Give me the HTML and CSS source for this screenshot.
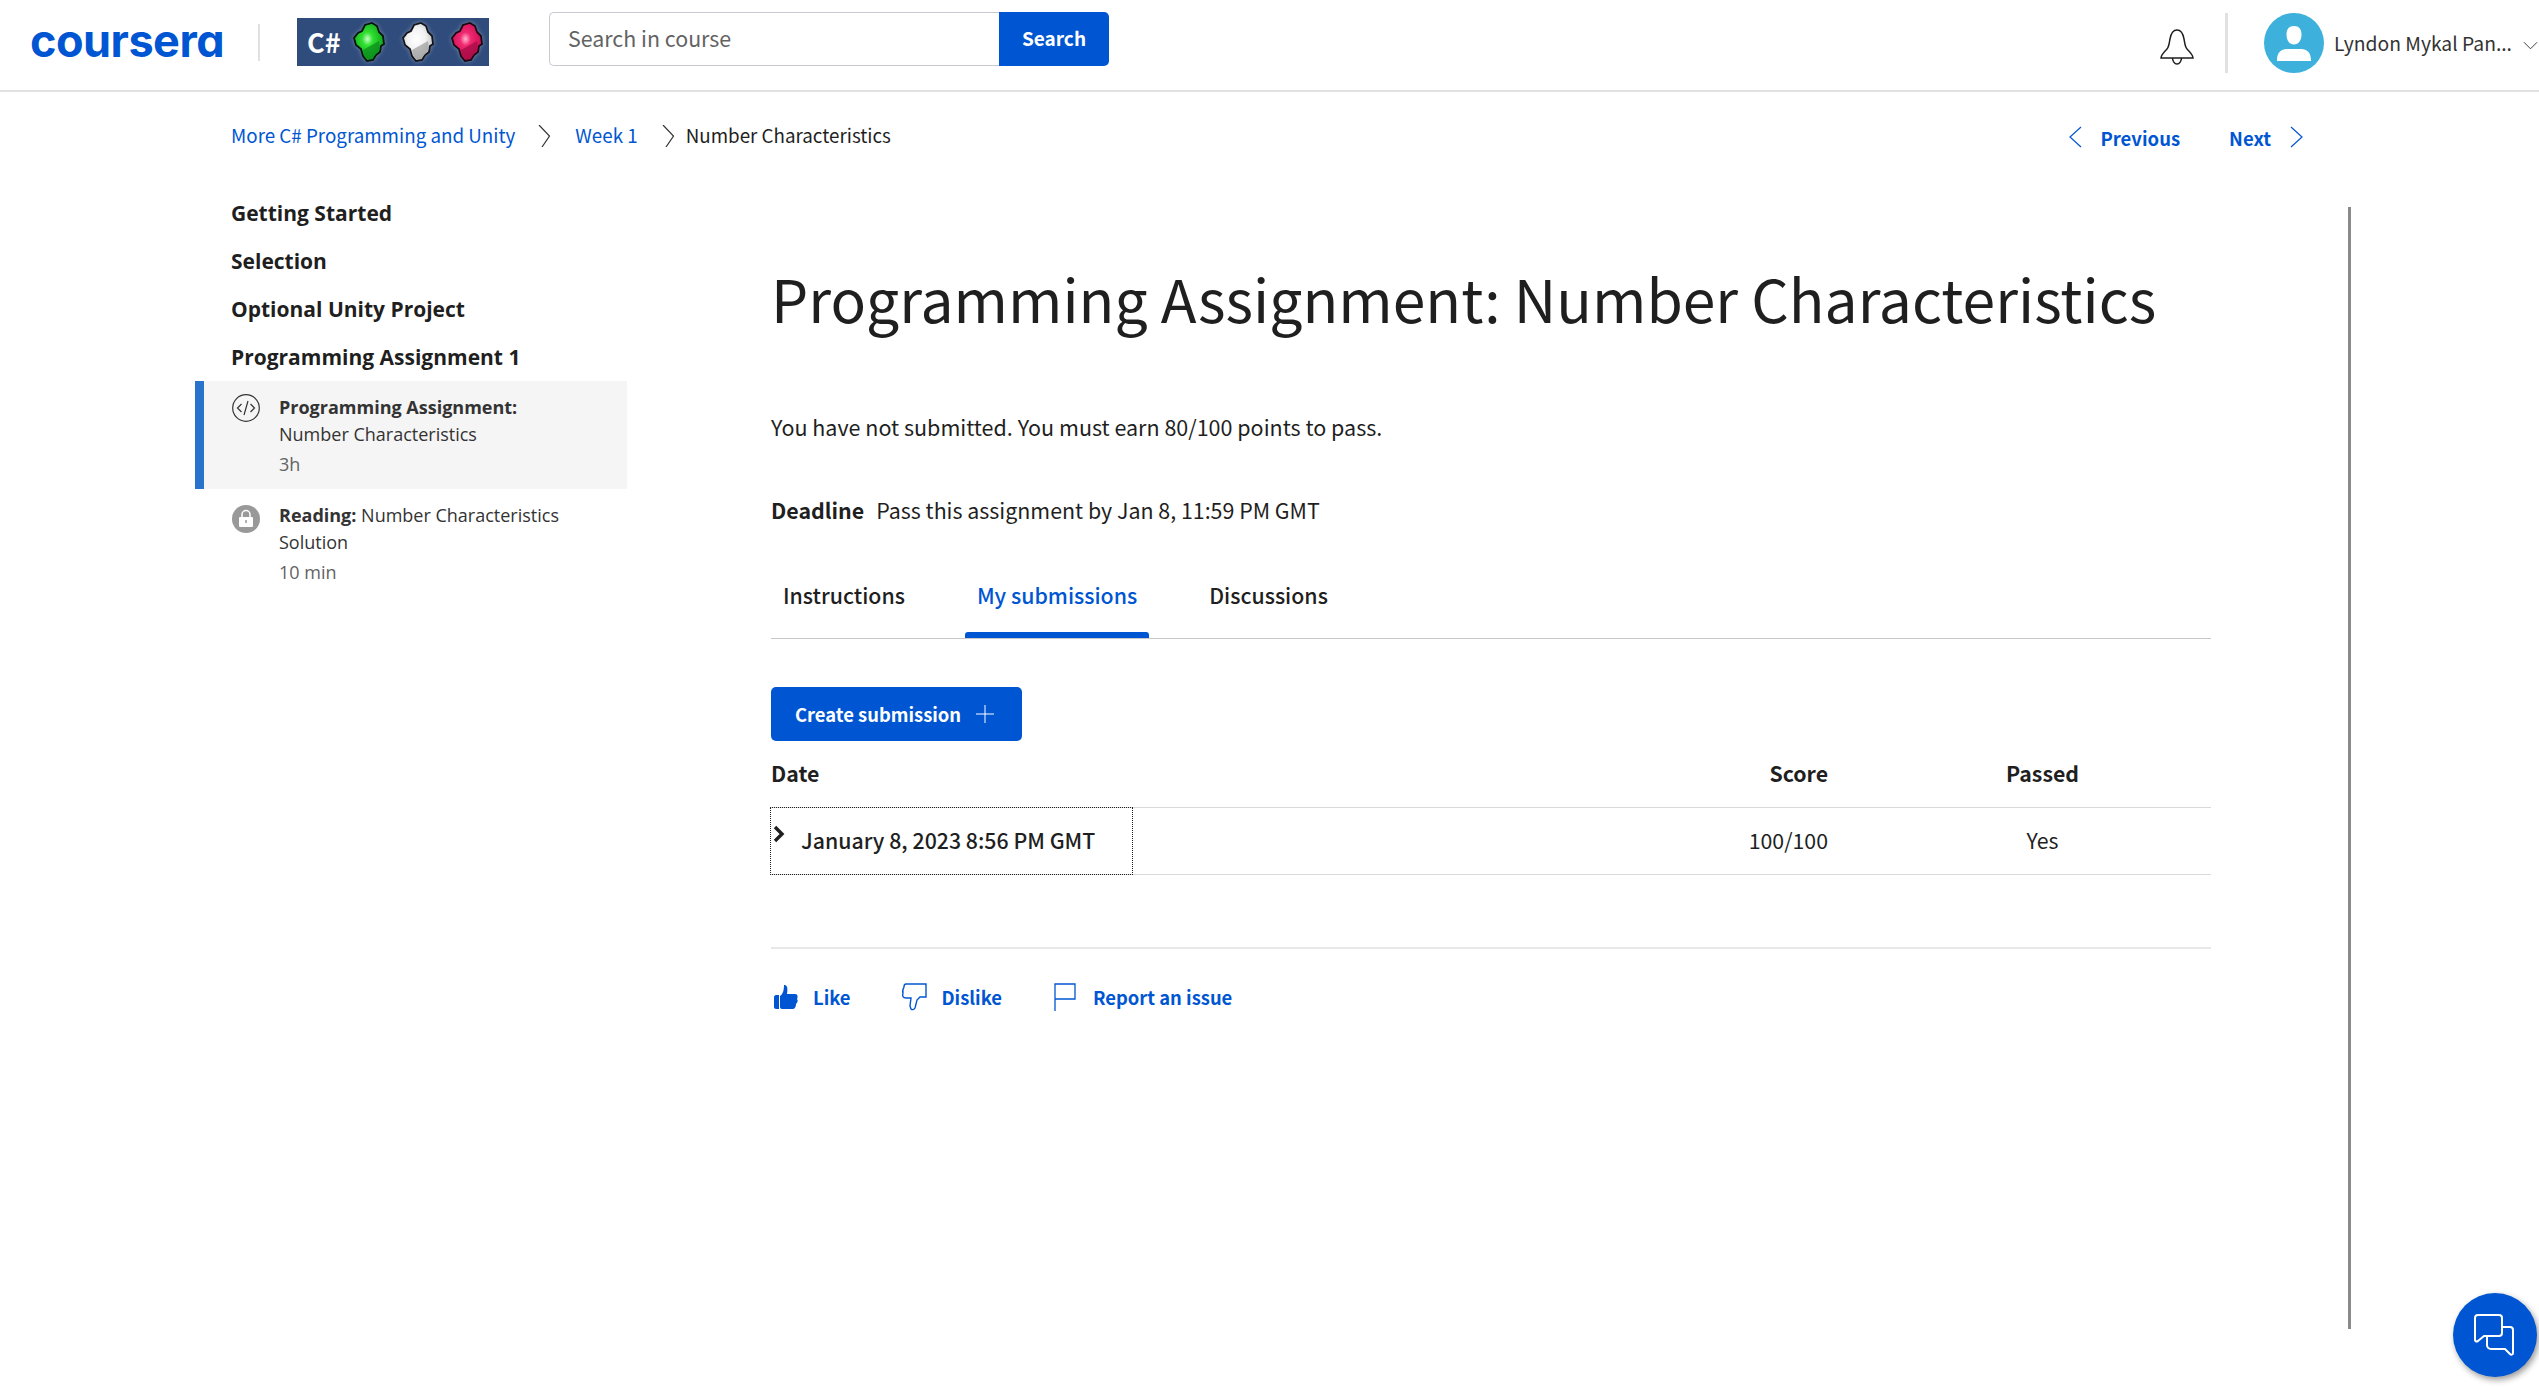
FILE: index.html
```html
<!DOCTYPE html>
<html lang="en">
<head>
<meta charset="utf-8">
<title>Programming Assignment: Number Characteristics</title>
<link rel="stylesheet" href="styles.css">
</head>
<body>
<header class="topbar">
  <span class="logo">coursera</span>
  <div class="vrule"></div>
  <div class="partner">
    <span class="partner-c">C#</span>
    <svg class="gem" viewBox="0 0 32 40"><defs><radialGradient id="g1" cx=".45" cy=".42" r=".6"><stop offset="0" stop-color="#c8ffc8"/><stop offset=".3" stop-color="#2fe02f"/><stop offset="1" stop-color="#0c9a1a"/></radialGradient></defs><path d="M19 1 24 4 26 10 30 14 31 22 28 24 27 30 23 33 20 38 14 39 10 34 8 27 3 23 1 16 5 11 9 9 12 3Z" fill="url(#g1)" stroke="#06150a" stroke-width="1.800"/><path d="M10 28 26 19 27 27 23 32 19 37 14 37 11 33Z" fill="#0a8a1c" opacity=".7"/></svg>
    <svg class="gem" viewBox="0 0 32 40"><defs><radialGradient id="g2" cx=".45" cy=".42" r=".6"><stop offset="0" stop-color="#fff"/><stop offset=".5" stop-color="#f2f2f2"/><stop offset="1" stop-color="#bdbdbd"/></radialGradient></defs><path d="M19 1 24 4 26 10 30 14 31 22 28 24 27 30 23 33 20 38 14 39 10 34 8 27 3 23 1 16 5 11 9 9 12 3Z" fill="url(#g2)" stroke="#15151a" stroke-width="1.800"/><path d="M10 28 26 19 27 27 23 32 19 37 14 37 11 33Z" fill="#9b9b9b" opacity=".7"/></svg>
    <svg class="gem last" viewBox="0 0 32 40"><defs><radialGradient id="g3" cx=".45" cy=".42" r=".6"><stop offset="0" stop-color="#ffb5d0"/><stop offset=".3" stop-color="#f0276f"/><stop offset="1" stop-color="#c20c50"/></radialGradient></defs><path d="M19 1 24 4 26 10 30 14 31 22 28 24 27 30 23 33 20 38 14 39 10 34 8 27 3 23 1 16 5 11 9 9 12 3Z" fill="url(#g3)" stroke="#1c0610" stroke-width="1.800"/><path d="M10 28 26 19 27 27 23 32 19 37 14 37 11 33Z" fill="#a30a44" opacity=".7"/></svg>
  </div>
  <form class="search">
    <div class="search-input">Search in course</div>
    <div class="search-btn">Search</div>
  </form>
  <div class="spacer"></div>
  <svg class="bell" viewBox="0 0 34 38" fill="none" stroke="#1f1f1f" stroke-width="1.500"><path d="M1 30h32c0-3-3-6-6-9-2-2-2-5-3-10C23 5 21 2 17 2s-6 3-7 9c-1 5-1 8-3 10-3 3-6 6-6 9Z"/><path d="M12.500 30c0 3 2 6 4.500 6s4.500-3 4.500-6"/></svg>
  <div class="vrule tall"></div>
  <svg class="avatar" viewBox="0 0 60 60"><circle cx="30" cy="30" r="30" fill="#3eb0dc"/><path d="M30 13c5 0 7.500 3 7.500 8.500 0 6-3 10-7.500 10s-7.500-4-7.500-10C22.500 16 25 13 30 13ZM13 48c0-7 2-11 9-12h16c7 1 9 5 9 12Z" fill="#fff"/></svg>
  <span class="username">Lyndon Mykal Pan...</span>
  <svg class="caret" viewBox="0 0 16 9" fill="none" stroke="#333" stroke-width="1"><path d="M1 1l7 7 7-7"/></svg>
</header>

<nav class="crumbs">
  <a class="link">More C# Programming and Unity</a>
  <svg class="crumb-arrow" viewBox="0 0 13 22" fill="none" stroke="#333" stroke-width="1.200"><path d="M1 0l10.500 11L4 22"/></svg>
  <a class="link">Week 1</a>
  <svg class="crumb-arrow second" viewBox="0 0 13 22" fill="none" stroke="#333" stroke-width="1.200"><path d="M1 0l10.500 11L4 22"/></svg>
  <span>Number Characteristics</span>
  <div class="spacer"></div>
  <svg class="pager-arrow" viewBox="0 0 13 22" fill="none" stroke="#0056d2" stroke-width="1.200"><path d="M12 1 1 11l11 10"/></svg>
  <a class="pager-link prev">Previous</a>
  <a class="pager-link next">Next</a>
  <svg class="pager-arrow" viewBox="0 0 13 22" fill="none" stroke="#0056d2" stroke-width="1.200"><path d="M1 1l11 10L1 21"/></svg>
</nav>

<div class="layout">
  <aside class="sidebar">
    <h3 class="week">Getting Started</h3>
    <h3 class="week">Selection</h3>
    <h3 class="week">Optional Unity Project</h3>
    <h3 class="week">Programming Assignment 1</h3>
    <div class="item active">
      <svg class="item-icon" viewBox="0 0 28 28" fill="none" stroke="#333" stroke-width="1.200"><circle cx="14" cy="14" r="13.300"/><path d="M9.500 10l-4 4 4 4M18.500 10l4 4-4 4M16 7l-4 14"/></svg>
      <div class="item-text">
        <div><b>Programming Assignment:</b></div>
        <div>Number Characteristics</div>
        <div class="dur">3h</div>
      </div>
    </div>
    <div class="item">
      <svg class="item-icon lock" viewBox="0 0 28 28"><circle cx="14" cy="14" r="14" fill="#999"/><path d="M8 12h12a1 1 0 0 1 1 1v8a1 1 0 0 1-1 1H8a1 1 0 0 1-1-1v-8a1 1 0 0 1 1-1Z" fill="#fff"/><path d="M10 12V9.500a4 4 0 0 1 8 0V12" fill="none" stroke="#fff" stroke-width="1.500"/><rect x="13.300" y="15" width="1.500" height="3" fill="#999"/></svg>
      <div class="item-text">
        <div><b>Reading:</b> Number Characteristics</div>
        <div>Solution</div>
        <div class="dur">10 min</div>
      </div>
    </div>
  </aside>

  <main class="content">
    <h1 class="title">Programming Assignment: Number Characteristics</h1>
    <p class="status">You have not submitted. You must earn 80/100 points to pass.</p>
    <p class="deadline"><b>Deadline</b><span>Pass this assignment by Jan 8, 11:59 PM GMT</span></p>
    <div class="tabs">
      <div class="tab">Instructions</div>
      <div class="tab selected">My submissions</div>
      <div class="tab">Discussions</div>
    </div>
    <div class="create">Create submission
      <svg class="plus" viewBox="0 0 18 18" fill="none" stroke="#fff" stroke-width="1"><path d="M9 0v18M0 9h18"/></svg>
    </div>
    <div class="row head">
      <div class="c-date">Date</div>
      <div class="c-score">Score</div>
      <div class="c-passed">Passed</div>
    </div>
    <div class="row body">
      <div class="c-date focus">
        <svg class="expander" viewBox="0 0 12 18" fill="none" stroke="#1f1f1f" stroke-width="3.400"><path d="M2 2l7 7-7 7"/></svg>
        <span>January 8, 2023 8:56 PM GMT</span>
      </div>
      <div class="c-score">100/100</div>
      <div class="c-passed">Yes</div>
    </div>
    <div class="feedback">
      <a class="fb">
        <svg class="fb-icon like" viewBox="0 0 24 25"><path d="M10 0c3 0 4 2 3 9h8c3 0 3 3 2 5 1 1 1 3-1 5 0 2-1 5-3 5H8c-1 0-2-1-2-2V11C9 9 10 5 10 0ZM0 12c0-1 1-2 2-2h3v14H2c-1 0-2-1-2-2Z" fill="#0056d2"/></svg>
        Like</a>
      <a class="fb">
        <svg class="fb-icon dislike" viewBox="0 0 26 28" fill="none" stroke="#0056d2" stroke-width="1.400"><path d="M5 1h20v13h-6l-3 3-2 8c-1 2-3 2-4 1l-1-3 1-8H5c-3 0-4-2-3-5-1-2 0-4 1-6 0-2 1-3 2-3Z"/></svg>
        Dislike</a>
      <a class="fb">
        <svg class="fb-icon flag" viewBox="0 0 22 28" fill="none" stroke="#0056d2" stroke-width="1.300"><path d="M1 28V1h20v15H1"/></svg>
        Report an issue</a>
    </div>
  </main>
  <div class="scrollbar"></div>
</div>

<div class="chat">
  <svg viewBox="0 0 42 42" fill="none" stroke="#fff" stroke-width="2"><path d="M4 1h21a3 3 0 0 1 3 3v15a3 3 0 0 1-3 3H10l-6 5c-2 1-3 0-3-1V4a3 3 0 0 1 3-3Z"/><path d="M28 13h8a3 3 0 0 1 3 3v23c0 2-2 2-3 1l-5-5H17a4 4 0 0 1-4-4v-9"/></svg>
</div>
</body>
</html>
```
FILE: styles.css
```css
* { box-sizing: border-box; }
html, body { margin: 0; padding: 0; height: 100%; overflow: hidden; background: #fff; }
body { font-family: "Noto Sans CJK JP", "Liberation Sans", sans-serif; color: #1f1f1f; font-size: 20px; }
a { text-decoration: none; }
h1, h3, p { margin: 0; font-weight: normal; }
.spacer { flex: 1; }
.topbar { display: flex; align-items: center; height: 92px; border-bottom: 2px solid #e1e1e1; padding-left: 30px; }
.logo { width: 193px; flex: none; margin-bottom: 8px; font-family: "Inter", sans-serif; font-feature-settings: "cv11"; font-weight: 700; font-size: 45px; line-height: 50px; letter-spacing: -0.500px; color: #0056d2; white-space: nowrap; }
.vrule { width: 2px; height: 37px; background: #e1e1e1; margin-left: 35px; margin-bottom: 6px; flex: none; }
.partner { width: 192px; height: 48px; margin-left: 37px; margin-bottom: 6px; background: #2f4c7c; display: flex; align-items: center; padding-left: 10px; flex: none; }
.partner-c { color: #fff; font-size: 27px; font-weight: 700; width: 46px; line-height: 48px; flex: none; }
.gem { width: 32px; height: 40px; margin-right: 17px; flex: none; filter: drop-shadow(0 0 2px rgba(255,255,255,.35)); }
.gem.last { margin-right: 0; }
.search { display: flex; margin-left: 60px; width: 560px; height: 54px; flex: none; margin-bottom: 12px; }
.search-input { flex: 1; border: 1px solid #c9c9d3; border-right: 0; border-radius: 5px 0 0 5px; padding-left: 18px; line-height: 50px; color: #636363; font-size: 21.400px; }
.search-btn { width: 110px; background: #0056d2; color: #fff; font-weight: 700; font-size: 19px; line-height: 52px; text-align: center; border-radius: 0 5px 5px 0; }
.bell { width: 34px; height: 38px; margin-right: 31px; margin-top: 4px; flex: none; }
.vrule.tall { height: 60px; width: 3px; margin-left: 0; margin-right: 36px; margin-bottom: 4px; }
.avatar { width: 60px; height: 60px; flex: none; margin-bottom: 4px; }
.username { margin-left: 10px; margin-bottom: 4px; font-size: 19.300px; width: 188px; white-space: nowrap; color: #333; flex: none; }
.caret { width: 15px; height: 9px; margin-left: 1px; margin-right: 1px; flex: none; }
.crumbs { display: flex; align-items: center; height: 56px; margin: 14px 236px 1px 231px; font-size: 18.800px; }
.link { color: #0056d2; }
.crumb-arrow { width: 13px; height: 22px; margin: 4px 24px 0 23px; flex: none; }
.crumb-arrow.second { margin: 4px 11px 0 24px; }
.pager-arrow { width: 13px; height: 22px; flex: none; margin-top: 6px; }
.pager-link { color: #0056d2; font-weight: 700; font-size: 18.500px; margin-top: 7px; }
.pager-link.prev { margin-left: 18px; margin-right: 49px; }
.pager-link.next { margin-right: 19px; }
.layout { display: flex; }
.sidebar { width: 432px; margin-left: 195px; margin-top: 26px; flex: none; font-family: "Open Sans", sans-serif; }
.week { font-weight: 700; font-size: 21px; line-height: 48px; padding-left: 36px; color: #1f1f1f; }
.item { display: flex; padding: 13px 0 0 37px; height: 108px; font-size: 18px; line-height: 27px; color: #333; }
.item.active { background: #f5f5f5; border-left: 9px solid #2a73cc; padding-left: 28px; }
.item-icon { width: 28px; height: 28px; flex: none; }
.item-icon.lock { margin-top: 3px; }
.item-text { margin-left: 19px; }
.item-text b { font-weight: 700; }
.dur { color: #636363; margin-top: 3px; }
.content { width: 1440px; margin-left: 144px; flex: none; }
.title { font-size: 58.800px; line-height: 80px; margin-top: 95px; white-space: nowrap; }
.status { font-size: 21.500px; margin-top: 73px; line-height: 32px; }
.deadline { font-size: 21.400px; margin-top: 51px; line-height: 32px; }
.deadline b { font-weight: 700; margin-right: 12px; }
.tabs { display: flex; margin-top: 43px; height: 70px; border-bottom: 1px solid #c9c9c9; font-size: 21.300px; }
.tab { padding: 0 12px; line-height: 52px; margin-right: 48px; height: 69px; font-weight: 500; position: relative; }
.tab.selected { color: #0056d2; }
.tab.selected::after { content: ""; position: absolute; left: 0; right: 0; bottom: 0; height: 6px; background: #0056d2; border-radius: 3px 3px 0 0; }
.create { display: flex; align-items: center; width: 251px; height: 54px; margin-top: 48px; background: #0056d2; color: #fff; font-weight: 700; font-size: 18.400px; border-radius: 5px; padding-left: 24px; }
.plus { width: 18px; height: 18px; margin-left: 15px; }
.row { display: flex; height: 67px; font-size: 21.300px; align-items: center; border-bottom: 1px solid #d9d9d9; }
.row.head { font-weight: 700; }
.c-date { width: 361px; flex: none; padding-bottom: 4px; }
.c-score { width: 696px; flex: none; text-align: right; padding-bottom: 4px; }
.c-passed { width: 383px; flex: none; padding: 0 0 4px 46px; text-align: center; }
.focus { outline: 1px dotted #222; height: 66px; display: flex; align-items: center; position: relative; padding-left: 30px; font-weight: 500; }
.expander { position: absolute; left: 2px; top: 17px; width: 12px; height: 18px; }
.feedback { display: flex; margin-top: 72px; border-top: 2px solid #e8e8e8; padding-top: 34px; font-size: 18.400px; align-items: center; }
.fb { display: flex; align-items: center; color: #0056d2; font-weight: 700; }
.fb-icon { height: 28px; flex: none; }
.fb-icon.like { width: 24px; height: 25px; margin-left: 3px; margin-right: 15px; }
.fb-icon.dislike { width: 26px; margin-left: 51px; margin-right: 14px; }
.fb-icon.flag { width: 22px; margin-left: 52px; margin-right: 17px; }
.scrollbar { width: 3px; height: 1122px; background: #8a8a8a; margin-left: 137px; margin-top: 44px; flex: none; }
.chat { position: fixed; left: 2453px; top: 1293px; width: 84px; height: 84px; border-radius: 50%; background: #0056d2; box-shadow: 2px 3px 6px rgba(0,0,0,.4); display: flex; align-items: center; justify-content: center; }
.chat svg { width: 42px; height: 42px; }
```
